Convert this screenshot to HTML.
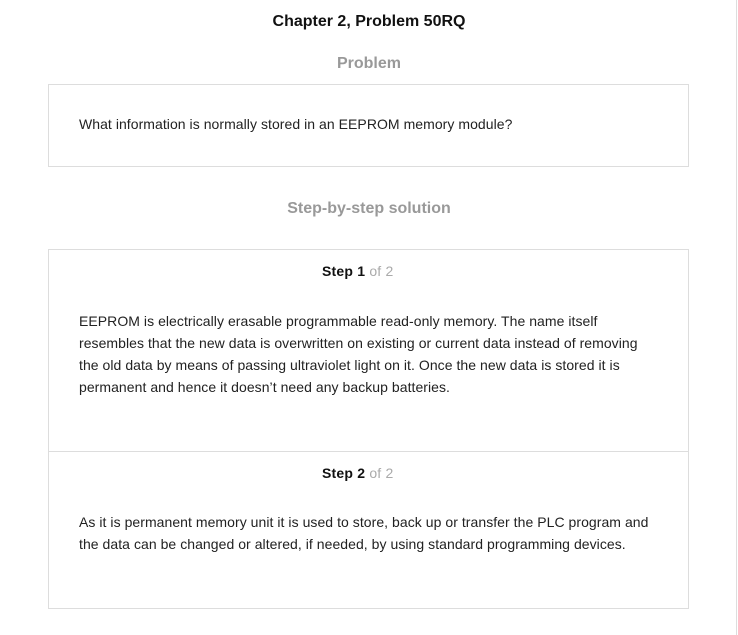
<!DOCTYPE html>
<html><head><style>
*{margin:0;padding:0;box-sizing:border-box}
body{width:738px;height:635px;background:#fff;font-family:"Liberation Sans",Arial,sans-serif;color:#222;position:relative;overflow:hidden}
.a{position:absolute}
.c{left:0;width:738px;text-align:center}
.box{position:absolute;left:48px;width:641px;border:1px solid #ddd}
.t{font-size:14px;line-height:22px;color:#222;white-space:nowrap;letter-spacing:0.05px}
</style></head><body>
<div class="a c" style="top:13px;font-size:16px;font-weight:bold;color:#111">Chapter 2, Problem 50RQ</div>
<div class="a c" style="top:55px;font-size:16px;font-weight:bold;color:#999">Problem</div>
<div class="box" style="top:84px;height:83px"></div>
<div class="a t" style="left:79px;top:113px">What information is normally stored in an EEPROM memory module?</div>
<div class="a c" style="top:200px;font-size:16px;font-weight:bold;color:#999">Step-by-step solution</div>
<div class="box" style="top:249px;height:360px"></div>
<div class="a" style="left:49px;top:451px;width:639px;height:1px;background:#ddd"></div>
<div class="a" style="left:322px;top:263px;font-size:14px;white-space:nowrap;letter-spacing:0.2px"><b style="color:#111">Step 1</b> <span style="color:#aaa">of 2</span></div>
<div class="a t" style="left:79px;top:310px">EEPROM is electrically erasable programmable read-only memory. The name itself<br>resembles that the new data is overwritten on existing or current data instead of removing<br>the old data by means of passing ultraviolet light on it. Once the new data is stored it is<br>permanent and hence it doesn’t need any backup batteries.</div>
<div class="a" style="left:322px;top:465px;font-size:14px;white-space:nowrap;letter-spacing:0.2px"><b style="color:#111">Step 2</b> <span style="color:#aaa">of 2</span></div>
<div class="a t" style="left:79px;top:511px">As it is permanent memory unit it is used to store, back up or transfer the PLC program and<br>the data can be changed or altered, if needed, by using standard programming devices.</div>
<div class="a" style="left:736px;top:0;width:1px;height:635px;background:#ddd"></div>
</body></html>
